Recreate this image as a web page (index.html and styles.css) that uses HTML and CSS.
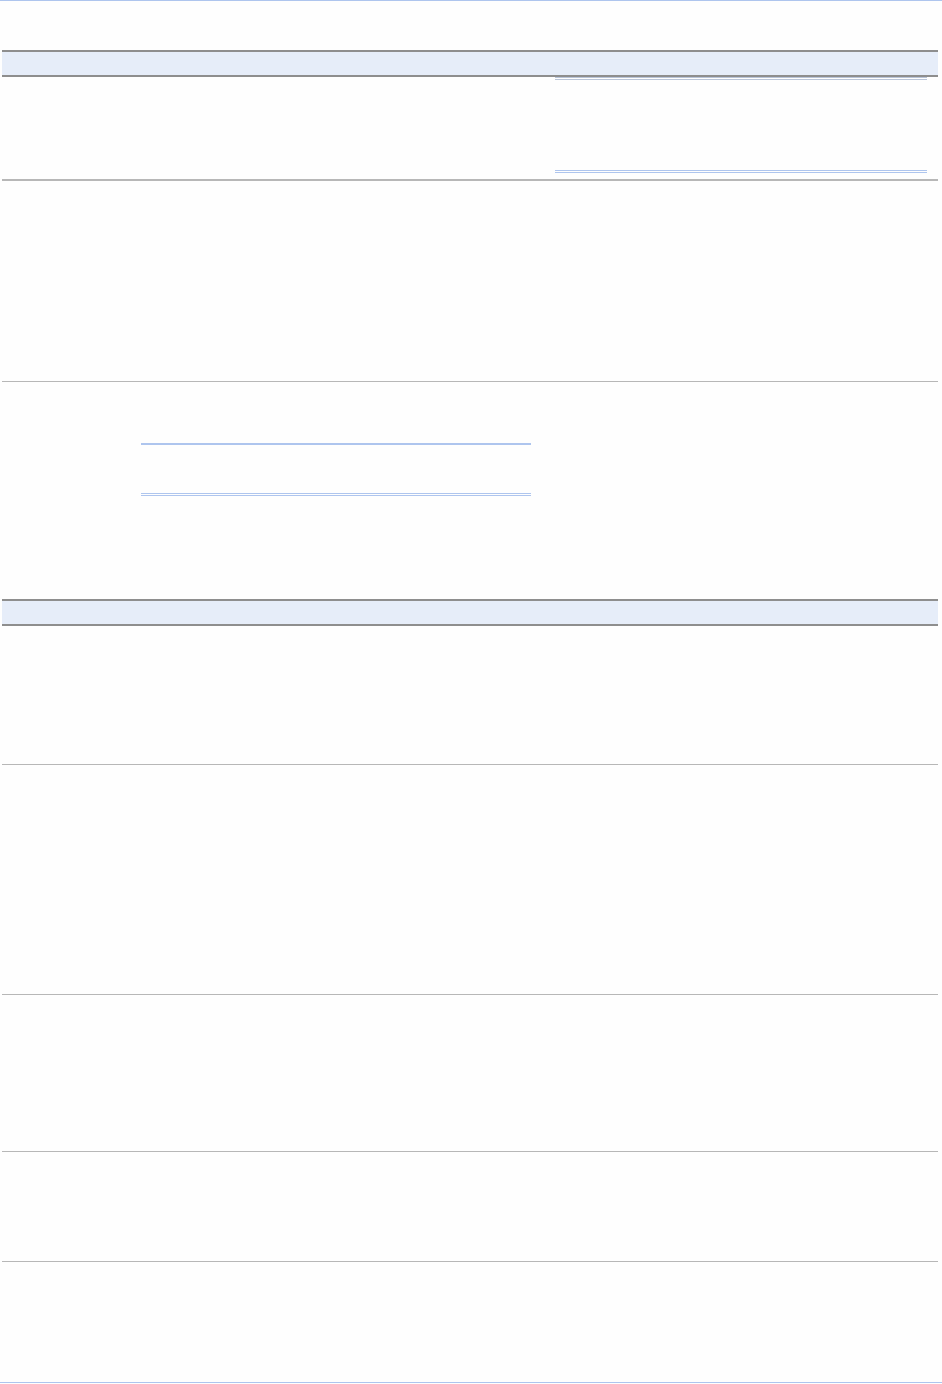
FILE: index.html
```html
<!DOCTYPE html>
<html lang="en">
<head>
    <meta charset="UTF-8">
    <meta name="viewport" content="width=device-width, initial-scale=1.0">
    <title>Form</title>
    <link rel="stylesheet" href="styles.css">
</head>
<body>
    <div class="page-rule"></div>

    <div class="sheet sheet-first">
        <div class="sheet-head"></div>
        <div class="sheet-row row-a">
            <div class="field field-wide"></div>
        </div>
        <div class="sheet-row row-b"></div>
        <div class="sheet-row row-c last">
            <div class="field field-mid"></div>
        </div>
    </div>

    <div class="sheet sheet-second">
        <div class="sheet-head"></div>
        <div class="sheet-row row-d"></div>
        <div class="sheet-row row-e"></div>
        <div class="sheet-row row-f"></div>
        <div class="sheet-row row-g"></div>
        <div class="sheet-row row-h last"></div>
    </div>

    <div class="page-rule"></div>
</body>
</html>
```

FILE: styles.css
```css
* {
    margin: 0;
    padding: 0;
    box-sizing: border-box;
}
body {
    font-family: "Liberation Sans", Arial, sans-serif;
    background-color: #fefefe;
    overflow: hidden;
}
.page-rule {
    height: 1px;
    background: #aec5ee;
}
.sheet {
    margin: 0 4px 0 2px;
}
.sheet-first {
    margin-top: 49px;
}
.sheet-second {
    margin-top: 20px;
}
.sheet-head {
    height: 27px;
    background: #e6edf9;
    border-top: 2px solid #8e8e8e;
    border-bottom: 2px solid #8e8e8e;
}
.sheet-row {
    border-bottom: 1px solid #b7b7b7;
}
.sheet-row.last {
    border-bottom: none;
}
.row-a {
    height: 104px;
    border-bottom-width: 2px;
}
.row-b { height: 201px; }
.row-c {
    height: 197px;
    padding-top: 61px;
}
.row-d { height: 139px; }
.row-e { height: 230px; }
.row-f { height: 157px; }
.row-g { height: 110px; }
.row-h { height: 120px; }

.field {
    border-top: 3px double #aec5ee;
    border-bottom: 3px double #aec5ee;
}
.field-wide {
    margin-left: 553px;
    width: 372px;
    height: 96px;
    border-top-color: #b9c4d8;
}
.field-mid {
    margin-left: 139px;
    width: 390px;
    height: 53px;
    border-top: 2px solid #aec5ee;
}
```
